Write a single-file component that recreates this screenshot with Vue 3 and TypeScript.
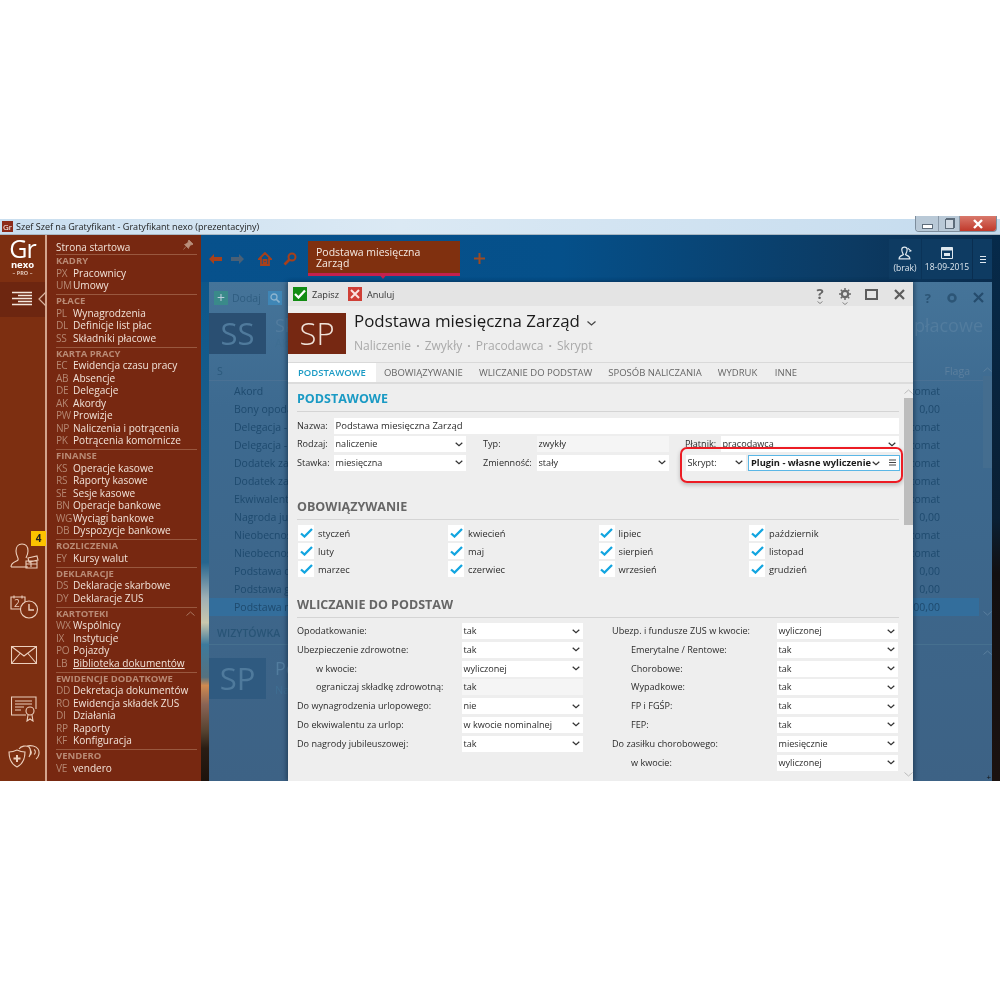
<script setup lang="ts">
interface Item { code: string; label: string; link?: boolean }
interface Section { title: string; items: Item[]; collapse?: boolean }

const sections: Section[] = [
  { title: 'KADRY', items: [{ code: 'PX', label: 'Pracownicy' }, { code: 'UM', label: 'Umowy' }] },
  { title: 'PŁACE', items: [{ code: 'PL', label: 'Wynagrodzenia' }, { code: 'DL', label: 'Definicje list płac' }, { code: 'SS', label: 'Składniki płacowe' }] },
  { title: 'KARTA PRACY', items: [{ code: 'EC', label: 'Ewidencja czasu pracy' }, { code: 'AB', label: 'Absencje' }, { code: 'DE', label: 'Delegacje' }, { code: 'AK', label: 'Akordy' }, { code: 'PW', label: 'Prowizje' }, { code: 'NP', label: 'Naliczenia i potrącenia' }, { code: 'PK', label: 'Potrącenia komornicze' }] },
  { title: 'FINANSE', items: [{ code: 'KS', label: 'Operacje kasowe' }, { code: 'RS', label: 'Raporty kasowe' }, { code: 'SE', label: 'Sesje kasowe' }, { code: 'BN', label: 'Operacje bankowe' }, { code: 'WG', label: 'Wyciągi bankowe' }, { code: 'DB', label: 'Dyspozycje bankowe' }] },
  { title: 'ROZLICZENIA', items: [{ code: 'EY', label: 'Kursy walut' }] },
  { title: 'DEKLARACJE', items: [{ code: 'DS', label: 'Deklaracje skarbowe' }, { code: 'DY', label: 'Deklaracje ZUS' }] },
  { title: 'KARTOTEKI', collapse: true, items: [{ code: 'WX', label: 'Wspólnicy' }, { code: 'IX', label: 'Instytucje' }, { code: 'PO', label: 'Pojazdy' }, { code: 'LB', label: 'Biblioteka dokumentów', link: true }] },
  { title: 'EWIDENCJE DODATKOWE', items: [{ code: 'DD', label: 'Dekretacja dokumentów' }, { code: 'RO', label: 'Ewidencja składek ZUS' }, { code: 'DI', label: 'Działania' }, { code: 'RP', label: 'Raporty' }, { code: 'KF', label: 'Konfiguracja' }] },
  { title: 'VENDERO', items: [{ code: 'VE', label: 'vendero' }] },
]

const bgRows: [string, string, boolean?][] = [
  ['Akord', 'Automat'], ['Bony opodatkowane', '0,00'], ['Delegacja - nocleg', 'Automat'], ['Delegacja - posiłki', 'Automat'],
  ['Dodatek za godziny', 'Automat'], ['Dodatek za godziny', 'Automat'], ['Ekwiwalent za urlop', 'Automat'], ['Nagroda jubileuszowa', '0,00'],
  ['Nieobecność', 'Automat'], ['Nieobecność', 'Automat'], ['Podstawa dzienna', '0,00'], ['Podstawa godzinowa', '0,00'], ['Podstawa miesięczna', '1000,00', true],
]

const tabs = ['PODSTAWOWE', 'OBOWIĄZYWANIE', 'WLICZANIE DO PODSTAW', 'SPOSÓB NALICZANIA', 'WYDRUK', 'INNE']
const months = ['styczeń', 'luty', 'marzec', 'kwiecień', 'maj', 'czerwiec', 'lipiec', 'sierpień', 'wrzesień', 'październik', 'listopad', 'grudzień']

interface Row { label: string; value: string; indent?: boolean; plain?: boolean }
const leftRows: Row[] = [
  { label: 'Opodatkowanie:', value: 'tak' },
  { label: 'Ubezpieczenie zdrowotne:', value: 'tak' },
  { label: 'w kwocie:', value: 'wyliczonej', indent: true },
  { label: 'ograniczaj składkę zdrowotną:', value: 'tak', indent: true, plain: true },
  { label: 'Do wynagrodzenia urlopowego:', value: 'nie' },
  { label: 'Do ekwiwalentu za urlop:', value: 'w kwocie nominalnej' },
  { label: 'Do nagrody jubileuszowej:', value: 'tak' },
]
const rightRows: Row[] = [
  { label: 'Ubezp. i fundusze ZUS w kwocie:', value: 'wyliczonej' },
  { label: 'Emerytalne / Rentowe:', value: 'tak', indent: true },
  { label: 'Chorobowe:', value: 'tak', indent: true },
  { label: 'Wypadkowe:', value: 'tak', indent: true },
  { label: 'FP i FGŚP:', value: 'tak', indent: true },
  { label: 'FEP:', value: 'tak', indent: true },
  { label: 'Do zasiłku chorobowego:', value: 'miesięcznie' },
  { label: 'w kwocie:', value: 'wyliczonej', indent: true },
]
const columns = [leftRows, rightRows]
</script>

<template>
  <div class="page">
    <div class="window">
      <div class="titlebar">
        <span class="app-icon">Gr</span>
        <span class="title-text">Szef Szef na Gratyfikant - Gratyfikant nexo (prezentacyjny)</span>
        <div class="win-btns">
          <span class="wb wb-min"><i class="min-glyph"></i></span>
          <span class="wb wb-res"><i class="res-glyph"></i></span>
          <span class="wb wb-close">
            <svg width="14" height="10" viewBox="0 0 14 10"><path d="M3 1l8 8M11 1l-8 8" stroke="#fff" stroke-width="2.4" fill="none" /></svg>
          </span>
        </div>
      </div>

      <div class="app">
        <aside class="rail">
          <div class="logo">
            <span class="logo-gr">Gr</span>
            <span class="logo-nexo">nexo</span>
            <span class="logo-pro">– PRO –</span>
          </div>
          <div class="rail-active">
            <svg width="24" height="17" viewBox="0 0 24 17">
              <path d="M2 1.500h20M8 4.500h14M2 7.500h20M8 10.500h14M2 13.500h20" stroke="#f3e6dc" stroke-width="1.300" fill="none" />
            </svg>
            <svg class="rail-notch" width="9" height="16" viewBox="0 0 9 16"><path d="M8 1L1 8l7 7" stroke="#d9b4a0" stroke-width="1.200" fill="none" /></svg>
          </div>
          <div class="rail-icons">
            <div class="rail-icon ri-people">
              <span class="badge">4</span>
              <svg width="30" height="26" viewBox="0 0 30 26" fill="none" stroke="#eccfbd" stroke-width="1.100">
                <path d="M1 24c0-5 5-5 7-7 1-2-2-4-2-9 0-4 2-7 6-7s6 3 6 7c0 3-1 5-2 7" />
                <path d="M1 24h17" />
                <path d="M18 15l9-2 1 4-9 2zM16 18h11v7H16zM16 21h11M21 19v5" />
              </svg>
            </div>
            <div class="rail-icon ri-cal">
              <svg width="29" height="24" viewBox="0 0 29 24" fill="none" stroke="#eccfbd" stroke-width="1.100">
                <path d="M11 14H1V2h14v5M4 .5v3M12 .5v3" />
                <text x="4" y="12" font-size="10" fill="#eccfbd" stroke="none" font-family="Open Sans, sans-serif">2</text>
                <circle cx="19" cy="14.500" r="8.500" />
                <path d="M19 9v6h5" stroke-width="1.400" />
              </svg>
            </div>
            <div class="rail-icon ri-mail">
              <svg width="26" height="18" viewBox="0 0 26 18" fill="none" stroke="#eccfbd" stroke-width="1.100">
                <path d="M.5.500h25v17H.5zM.5.500L13 10 25.500.500M.5 17.500L9 7.500M25.500 17.500L17 7.500" />
              </svg>
            </div>
            <div class="rail-icon ri-cert">
              <svg width="26" height="26" viewBox="0 0 26 26" fill="none" stroke="#eccfbd" stroke-width="1.100">
                <path d="M15 19H.5V1h24.500v12" />
                <path d="M4 5h17M4 8h17M4 11h9M4 14h6" stroke-width="1" />
                <circle cx="19" cy="15" r="4" />
                <path d="M17 19l-1 6 3-2 3 2-1-6" />
              </svg>
            </div>
            <div class="rail-icon ri-shield">
              <svg width="32" height="23" viewBox="0 0 32 23" fill="none" stroke="#eccfbd" stroke-width="1.100">
                <path d="M1 7c4 0 6-1 8-2 2 1 4 2 8 2 0 7-2 12-8 15C3 19 1 14 1 7z" />
                <path d="M9 10v7M5.500 13.500h7" stroke-width="2" />
                <path d="M11 4c2-3 7-4 10-2 2 2 2 7 0 10M19 1c4-1 9 0 11 3 2 3 1 8-2 10M22 5a3 3 0 0 1 0 5M26 4.500a3 3 0 0 1 0 5" />
              </svg>
            </div>
          </div>
        </aside>

        <nav class="menu">
          <div class="menu-start">
            <span>Strona startowa</span>
            <svg class="pin" width="10" height="10" viewBox="0 0 10 10"><path d="M6 0l4 4-1 1-1-.5L6 7l-.5 1.500L1.500 4.500 3 4l2.500-2L5 1zM3 6.500L.5 9.500" fill="#b98f7b" stroke="#b98f7b" stroke-width=".7" /></svg>
          </div>
          <section v-for="s in sections" :key="s.title" class="menu-sec">
            <div class="menu-head">
              <span>{{ s.title }}</span>
              <svg v-if="s.collapse" width="9" height="5" viewBox="0 0 9 5"><path d="M.5 4.500l4-3.500 4 3.500" stroke="#a87660" fill="none" /></svg>
            </div>
            <div v-for="it in s.items" :key="it.code" class="menu-row">
              <span class="code">{{ it.code }}</span>
              <span class="lab" :class="{ link: it.link }">{{ it.label }}</span>
            </div>
          </section>
        </nav>

        <main class="desk">
          <div class="topbar">
            <div class="nav-icons">
              <svg width="14" height="12" viewBox="0 0 14 12"><path d="M6 1L1 6l5 5V8h8V4H6z" fill="#a8401a" /></svg>
              <svg class="nav-dim" width="14" height="12" viewBox="0 0 14 12"><path d="M8 1l5 5-5 5V8H0V4h8z" fill="#4a6076" /></svg>
              <svg class="nav-home" width="14" height="14" viewBox="0 0 14 14"><path d="M7 1L1 7h2v6h8V7h2zM5.500 8h3v3h-3z" fill="none" stroke="#a8401a" stroke-width="1.800" /></svg>
              <svg class="nav-find" width="14" height="14" viewBox="0 0 14 14"><circle cx="9" cy="5" r="3.500" fill="none" stroke="#a8401a" stroke-width="2" /><path d="M6.500 7.500L1.500 12.500" stroke="#a8401a" stroke-width="2.600" /></svg>
            </div>
            <div class="doc-tab">Podstawa miesięczna<br />Zarząd<i class="doc-arrow"></i></div>
            <svg class="add-tab" width="11" height="11" viewBox="0 0 11 11"><path d="M5.500 0v11M0 5.500h11" stroke="#a04a20" stroke-width="2" /></svg>
            <div class="top-right">
              <div class="tr-btn tr-user">
                <svg width="14" height="14" viewBox="0 0 13 13" fill="none" stroke="#dfe8ef" stroke-width="1.100"><path d="M1 12c0-3 3-3 4-4C4 6 3.500 5 3.500 3.500 3.500 2 4.500 1 6 1s2.500 1 2.500 2.500C8.500 5 8 6 7 8c1 1 4 1 4 4z" /><path d="M9 2l3 2.500-1.500.5" /></svg>
                <span>(brak)</span>
              </div>
              <div class="tr-btn tr-date">
                <svg width="12" height="12" viewBox="0 0 12 12"><path d="M.5.500h11v11H.5z" fill="none" stroke="#dfe8ef" /><path d="M.5.500h11v3H.5z" fill="#dfe8ef" /><path d="M3 6h6v3H3z" fill="#dfe8ef" /></svg>
                <span>18-09-2015</span>
              </div>
              <div class="tr-btn tr-menu"><i></i><i></i><i></i></div>
            </div>
          </div>

          <div class="bg-win">
            <div class="bg-tools">
              <span class="bg-add">+</span><span>Dodaj</span>
              <span class="bg-find"><svg width="10" height="10" viewBox="0 0 10 10"><circle cx="4" cy="4" r="3" fill="none" stroke="#8db4cf" stroke-width="1.300" /><path d="M6.200 6.200L9.500 9.500" stroke="#8db4cf" stroke-width="1.600" /></svg></span>
              <div class="bg-tools-right">
                <span>?</span>
                <svg width="12" height="12" viewBox="0 0 12 12"><circle cx="6" cy="6" r="3.500" fill="none" stroke="#2c5576" stroke-width="2.500" /></svg>
                <svg width="11" height="11" viewBox="0 0 11 11"><path d="M1 1l9 9M10 1l-9 9" stroke="#254c6d" stroke-width="2.200" /></svg>
              </div>
            </div>
            <div class="bg-head">
              <div class="bg-tile">SS</div>
              <div class="bg-head-text">
                <div class="bg-h1"><span>Składniki</span><span>płacowe</span></div>
                <div class="bg-h2">Aktywne</div>
              </div>
            </div>
            <div class="bg-thead"><span>S</span><span class="bg-flag">Flaga</span></div>
            <div class="bg-rows">
              <div v-for="(r, i) in bgRows" :key="i" class="bg-row" :class="{ sel: r[2] }">
                <span>{{ r[0] }}</span><span>{{ r[1] }}</span>
              </div>
            </div>
            <div class="bg-wiz">WIZYTÓWKA</div>
            <div class="bg-head bg-head2">
              <div class="bg-tile">SP</div>
              <div class="bg-head-text">
                <div class="bg-h1"><span>Podstawa</span></div>
                <div class="bg-h2">Naliczenie</div>
              </div>
            </div>
            <i class="bg-thumb"></i>
            <svg class="bg-ch bg-ch1" width="9" height="5" viewBox="0 0 9 5"><path d="M.5 4.500l4-3.500 4 3.500" stroke="#5b7f9e" fill="none" /></svg>
            <svg class="bg-ch bg-ch2" width="9" height="5" viewBox="0 0 9 5"><path d="M.5.500l4 3.500 4-3.500" stroke="#5b7f9e" fill="none" /></svg>
            <svg class="bg-ch bg-ch3" width="9" height="5" viewBox="0 0 9 5"><path d="M.5 4.500l4-3.500 4 3.500" stroke="#5b7f9e" fill="none" /></svg>
            <span class="bg-grip">+</span>
          </div>

          <div class="modal">
            <div class="m-tools">
              <span class="tb tb-ok"><svg width="12" height="10" viewBox="0 0 12 10"><path d="M1 5l3.500 3.500L11 1.500" stroke="#fff" stroke-width="2.300" fill="none" /></svg></span>
              <span class="tb-label">Zapisz</span>
              <span class="tb tb-no"><svg width="10" height="10" viewBox="0 0 10 10"><path d="M1 1l8 8M9 1l-8 8" stroke="#fbe3df" stroke-width="2" fill="none" /></svg></span>
              <span class="tb-label">Anuluj</span>
              <div class="m-tools-right">
                <span class="mt-q">?<svg width="6" height="3" viewBox="0 0 6 3"><path d="M.5.500L3 2.500 5.500.500" stroke="#888" fill="none" /></svg></span>
                <span class="mt-g">
                  <svg width="12" height="12" viewBox="0 0 12 12"><circle cx="6" cy="6" r="3.200" fill="none" stroke="#6a6a6a" stroke-width="2.200" /><path d="M6 0v2.500M6 9.500V12M0 6h2.500M9.500 6H12M1.800 1.800l1.700 1.700M8.500 8.500l1.700 1.700M10.200 1.800L8.500 3.500M3.500 8.500l-1.700 1.700" stroke="#6a6a6a" stroke-width="1.500" /></svg>
                  <svg width="6" height="3" viewBox="0 0 6 3"><path d="M.5.500L3 2.500 5.500.500" stroke="#888" fill="none" /></svg>
                </span>
                <svg class="mt-max" width="13" height="11" viewBox="0 0 13 11"><path d="M1 1h11v9H1z" fill="none" stroke="#5c5c5c" stroke-width="2" /></svg>
                <svg class="mt-x" width="11" height="11" viewBox="0 0 11 11"><path d="M1 1l9 9M10 1l-9 9" stroke="#5c5c5c" stroke-width="2.200" /></svg>
              </div>
            </div>

            <div class="m-head">
              <div class="m-tile">SP</div>
              <div class="m-head-text">
                <div class="m-title">Podstawa miesięczna Zarząd
                  <svg width="9" height="5" viewBox="0 0 9 5"><path d="M.5.500l4 3.500 4-3.500" stroke="#444" stroke-width="1.200" fill="none" /></svg>
                </div>
                <div class="m-sub">Naliczenie <b>·</b> Zwykły <b>·</b> Pracodawca <b>·</b> Skrypt</div>
              </div>
            </div>

            <div class="m-tabs">
              <span v-for="(t, i) in tabs" :key="t" class="m-tab" :class="{ on: i === 0 }">{{ t }}</span>
            </div>

            <div class="m-body">
              <h2 class="sec">PODSTAWOWE</h2>
              <div class="basic">
                <div class="b-row">
                  <label class="b-lab">Nazwa:</label>
                  <div class="field grow nazwa">Podstawa miesięczna Zarząd</div>
                </div>
                <div class="b-row">
                  <label class="b-lab">Rodzaj:</label>
                  <div class="field sel-w">naliczenie<svg class="chev" width="8" height="5" viewBox="0 0 8 5"><path d="M.7.700L4 3.800 7.300.700" stroke="#333" stroke-width="1.200" fill="none" /></svg></div>
                  <label class="b-lab2">Typ:</label>
                  <div class="field sel-w plain">zwykły</div>
                  <label class="b-lab3">Płatnik:</label>
                  <div class="field grow">pracodawca<svg class="chev" width="8" height="5" viewBox="0 0 8 5"><path d="M.7.700L4 3.800 7.300.700" stroke="#333" stroke-width="1.200" fill="none" /></svg></div>
                </div>
                <div class="b-row">
                  <label class="b-lab">Stawka:</label>
                  <div class="field sel-w">miesięczna<svg class="chev" width="8" height="5" viewBox="0 0 8 5"><path d="M.7.700L4 3.800 7.300.700" stroke="#333" stroke-width="1.200" fill="none" /></svg></div>
                  <label class="b-lab2">Zmienność:</label>
                  <div class="field sel-w">stały<svg class="chev" width="8" height="5" viewBox="0 0 8 5"><path d="M.7.700L4 3.800 7.300.700" stroke="#333" stroke-width="1.200" fill="none" /></svg></div>
                  <div class="field skrypt-lab">Skrypt:<svg class="chev" width="8" height="5" viewBox="0 0 8 5"><path d="M.7.700L4 3.800 7.300.700" stroke="#333" stroke-width="1.200" fill="none" /></svg></div>
                  <div class="field skrypt">
                    <b>Plugin - własne wyliczenie</b>
                    <svg class="chev2" width="8" height="5" viewBox="0 0 8 5"><path d="M.7.700L4 3.800 7.300.700" stroke="#333" stroke-width="1.200" fill="none" /></svg>
                    <svg class="ham" width="7" height="7" viewBox="0 0 7 7"><path d="M0 1h7M0 3.500h7M0 6h7" stroke="#444" /></svg>
                  </div>
                </div>
              </div>
              <div class="red-box"></div>

              <h2 class="sec sec-grey sec-2">OBOWIĄZYWANIE</h2>
              <div class="months">
                <div v-for="m in months" :key="m" class="month">
                  <span class="box"><svg width="13" height="10" viewBox="0 0 13 10"><path d="M1 5.500l3.500 3L12 1" stroke="#12a5e0" stroke-width="2.300" fill="none" /></svg></span>
                  <span>{{ m }}</span>
                </div>
              </div>

              <h2 class="sec sec-grey sec-3">WLICZANIE DO PODSTAW</h2>
              <div class="wl">
                <div v-for="(col, ci) in columns" :key="ci" class="wl-col">
                  <div v-for="r in col" :key="r.label + r.value" class="wl-row">
                    <label class="wl-lab" :class="{ ind: r.indent }">{{ r.label }}</label>
                    <div class="field wl-sel" :class="{ plain: r.plain }">{{ r.value }}
                      <svg v-if="!r.plain" class="chev" width="8" height="5" viewBox="0 0 8 5"><path d="M.7.700L4 3.800 7.300.700" stroke="#333" stroke-width="1.200" fill="none" /></svg>
                    </div>
                  </div>
                </div>
              </div>

              <div class="m-scroll">
                <svg width="9" height="5" viewBox="0 0 9 5"><path d="M.5 4.500l4-3.500 4 3.500" stroke="#bbb" fill="none" /></svg>
                <i class="m-thumb"></i>
                <svg class="m-scroll-down" width="9" height="5" viewBox="0 0 9 5"><path d="M.5.500l4 3.500 4-3.500" stroke="#bbb" fill="none" /></svg>
              </div>
            </div>
          </div>
        </main>
      </div>
    </div>
  </div>
</template>

<style>
html, body { margin: 0; background: #fff; }
</style>

<style scoped>
.page {
  width: 1000px;
  height: 1000px;
  padding-top: 219px;
  box-sizing: border-box;
  background: #fff;
  font-family: "Open Sans", "Noto Sans", sans-serif;
  overflow: hidden;
  filter: blur(0.35px);
}
.window { height: 562px; display: flex; flex-direction: column; }
.titlebar {
  height: 16px;
  display: flex;
  align-items: center;
  position: relative;
  background: linear-gradient(to right, #c9deef, #dbe9f4 40%, #c4dbee);
  border-bottom: 1px solid #a9b8c4;
  box-sizing: border-box;
}
.app-icon {
  width: 11px; height: 11px; margin-left: 2px; background: #8c2a18; color: #fff;
  font-size: 8px; line-height: 11px; text-align: center;
}
.title-text { margin-left: 3px; font-size: 9.050px; color: #1c1c1c; white-space: nowrap; }
.win-btns {
  position: absolute; right: 3px; top: -3px; display: flex; height: 15px;
  border: 1px solid #7d8d9c; border-top: 0; border-radius: 0 0 4px 4px; overflow: hidden;
}
.wb { display: flex; align-items: center; justify-content: center; }
.wb-min { width: 22px; background: #b9c9d7; border-right: 1px solid #8a99a8; }
.wb-res { width: 20px; background: #b9c9d7; border-right: 1px solid #8a99a8; }
.wb-close { width: 36px; background: linear-gradient(#d9796c, #c0392b); }
.min-glyph { width: 9px; height: 3px; background: #fff; border: 1px solid #5d6c7a; margin-top: 5px; }
.res-glyph { width: 7px; height: 8px; border: 1px solid #5d6c7a; background: #cfd9e3; box-shadow: 1px -1px 0 #5d6c7a; }

.app { flex: 1; display: flex; min-height: 0; }

.rail {
  width: 45px; flex: none; background: #7d2f11; border-right: 2px solid #d3a48d;
  display: flex; flex-direction: column; position: relative;
}
.logo { height: 47px; display: flex; flex-direction: column; align-items: center; color: #fff; padding-top: 1px; box-sizing: border-box; }
.logo-gr { font-size: 25px; line-height: 25px; letter-spacing: -1px; font-weight: 400; }
.logo-nexo { font-size: 9.500px; line-height: 8px; font-weight: 700; }
.logo-pro { font-size: 5.500px; line-height: 9px; font-weight: 700; color: #e2c8ba; }
.rail-active {
  height: 35px; background: #6d2610; display: flex; align-items: center; justify-content: flex-end;
  padding-right: 11px; position: relative;
}
.rail-notch { position: absolute; right: -2px; top: 9px; }
.rail-icons { position: relative; flex: 1; }
.rail-icon { position: absolute; line-height: 0; }
.ri-people { left: 10px; top: 226px; }
.ri-cal { left: 9.500px; top: 278px; }
.ri-mail { left: 11px; top: 329px; }
.ri-cert { left: 11px; top: 379px; }
.ri-shield { left: 8px; top: 428px; }
.badge {
  position: absolute; left: 21px; top: -12px; width: 15px; height: 15px; background: #fdc300;
  color: #222; font-size: 10px; font-weight: 700; line-height: 15px; text-align: center;
}

.menu {
  width: 154px; flex: none; background: #772811; padding: 5.500px 4px 0 9px; box-sizing: border-box;
  color: #f1e2d8; font-size: 10.100px; line-height: 10.500px; overflow: hidden;
}
.menu-start { display: flex; justify-content: space-between; align-items: flex-start; border-bottom: 1px solid #99583f; padding-bottom: .5px; height: 13px; box-sizing: content-box; font-size: 10px; line-height: 12px; }
.pin { margin: -1px 4px 0 0; }
.menu-sec { border-bottom: 1px solid #99583f; padding-bottom: 1.500px; }
.menu-sec:last-child { border-bottom: 0; }
.menu-head { height: 12.500px; display: flex; justify-content: space-between; align-items: center; font-weight: 700; font-size: 9.500px; color: #b98a75; white-space: nowrap; padding-right: 2px; }
.menu-row { height: 12.500px; display: flex; white-space: nowrap; }
.code { width: 17px; flex: none; color: #b58772; letter-spacing: -.3px; }
.lab.link { text-decoration: underline; }

.desk {
  flex: 1; position: relative; min-width: 0; overflow: hidden;
  background-color: #0b4a7c;
  background-image:
    linear-gradient(to bottom, #062a4a 0, #0a1f33 52%, #120f10 62%, #1b1210 100%),
    linear-gradient(to right, #07518c 0, #05508a 45%, #0c3a62 82%, #092b4c 100%),
    linear-gradient(to bottom, #095489 0, #27668f 60%, #9fb0b5 66.500%, #c9c7ae 71%, #3d7a9c 75%, #55717f 81%, #d08a50 82.500%, #8a6455 86%, #54412f 91%, #2a1d14 94%, #1c120c 100%);
  background-size: 8px 100%, 100% 47px, 100% 100%;
  background-position: right top, left top, left top;
  background-repeat: no-repeat;
}

.topbar { height: 47px; position: relative; }
.nav-icons { position: absolute; left: 7px; top: 17px; display: flex; align-items: center; line-height: 0; }
.nav-dim { margin-left: 9px; }
.nav-home { margin-left: 13px; }
.nav-find { margin-left: 11px; }
.doc-tab {
  position: absolute; left: 107px; top: 6px; width: 152px; height: 35px; background: #80300f;
  border-bottom: 3px solid #c4214e; box-sizing: border-box; color: #f5ebe4;
  font-size: 10.500px; line-height: 11px; padding: 5.500px 8px 0; font-weight: 500;
}
.doc-arrow {
  position: absolute; left: 70px; top: 32px; border-left: 5px solid transparent; border-right: 5px solid transparent;
  border-top: 6px solid #c4214e;
}
.add-tab { position: absolute; left: 273px; top: 18px; }
.top-right { position: absolute; right: 8px; top: 4px; height: 40px; display: flex; gap: 1px; color: #dfe8ef; font-size: 8.500px; }
.tr-btn { background: #0e3b62; display: flex; flex-direction: column; align-items: center; justify-content: center; gap: 2px; }
.tr-user { width: 32px; }
.tr-date { width: 50px; }
.tr-menu { width: 19px; gap: 2px; }
.tr-menu i { width: 6px; height: 1px; background: #dfe8ef; }

.bg-win {
  position: absolute; left: 8px; top: 47px; width: 783px; bottom: 0;
  background: linear-gradient(#457499 0, #3d6a90 25%, #3d6285 100%);
  color: #1e4a6e; font-size: 10.500px;
}
.bg-tools { height: 31px; display: flex; align-items: center; padding: 0 0 0 5px; gap: 4px; font-size: 10.500px; color: #2f5d80; }
.bg-add { width: 14px; height: 14px; background: #3a8a8a; color: #bcd; text-align: center; line-height: 13px; font-size: 14px; }
.bg-find { width: 14px; height: 14px; background: #3f86b6; margin-left: 3px; display: flex; align-items: center; justify-content: center; }
.bg-tools-right { margin-left: auto; display: flex; align-items: center; gap: 15px; padding-right: 8px; font-size: 13px; font-weight: 700; color: #2c5576; }
.bg-head { display: flex; height: 49px; gap: 9px; }
.bg-tile { width: 57px; height: 41px; background: #2a4f72; color: #4f7a9c; font-size: 31px; line-height: 40px; text-align: center; flex: none; }
.bg-head-text { flex: 1; padding-right: 9px; }
.bg-h1 { display: flex; justify-content: space-between; font-size: 18px; line-height: 24px; color: #527c9e; }
.bg-h2 { font-size: 11px; line-height: 16px; color: #3f6e92; margin-top: -2px; }
.bg-thead { height: 18px; display: flex; justify-content: space-between; padding: 0 22px 0 8px; align-items: center; border-bottom: 1px solid #4a7194; color: #2b597c; }
.bg-flag { color: #5b7f9e; }
.bg-rows { margin-top: 1px; width: 770px; }
.bg-row { height: 18px; line-height: 18px; display: flex; justify-content: space-between; padding: 0 39px 0 25px; box-sizing: border-box; }
.bg-row.sel { background: #336e9c; }
.bg-wiz { height: 25px; line-height: 26px; padding-left: 8px; font-weight: 600; color: #285476; font-size: 10.500px; border-bottom: 1px solid #46708f; box-sizing: border-box; margin-top: 4px; }
.bg-head2 { margin-top: 13px; height: 41px; }
.bg-head2 .bg-tile { background: #2f5a80; }
.bg-head2 .bg-h1 { margin-top: -2px; }
.bg-head2 .bg-h2 { margin-top: 2px; }
.bg-thumb { position: absolute; right: 0; top: 94px; width: 9px; height: 92px; background: #446d8f; }
.bg-ch { position: absolute; right: 0; }
.bg-ch1 { top: 85px; }
.bg-ch2 { top: 329px; }
.bg-ch3 { top: 368px; }
.bg-grip { position: absolute; right: 1px; bottom: 0; font-size: 8px; line-height: 8px; color: #111; }

.modal {
  position: absolute; left: 87px; top: 47px; width: 625px; bottom: 0; background: #eeeeee;
  display: flex; flex-direction: column; box-shadow: -2px 0 4px rgba(10, 30, 50, .4), 2px 0 4px rgba(10, 30, 50, .4);
  color: #2b2b2b;
}
.m-tools { height: 24px; background: #e4e4e4; display: flex; align-items: center; padding-left: 5px; font-size: 9.200px; }
.tb { width: 14px; height: 14px; display: flex; align-items: center; justify-content: center; }
.tb-ok { background: #128c13; }
.tb-no { background: #cf3f36; margin-left: 9px; }
.tb-label { margin-left: 5px; color: #333; }
.m-tools-right { margin-left: auto; display: flex; align-items: center; height: 100%; padding-right: 8px; }
.mt-q { display: flex; flex-direction: column; align-items: center; font-size: 15px; font-weight: 700; line-height: 15px; color: #666; width: 10px; margin-top: 1px; }
.mt-g { display: flex; flex-direction: column; align-items: center; gap: 2px; margin-left: 14px; margin-top: 5px; }
.mt-max { margin-left: 14px; }
.mt-x { margin-left: 16px; }
.m-head { height: 56px; display: flex; padding-top: 7px; box-sizing: border-box; }
.m-tile { width: 58px; height: 41px; background: #762812; color: #f0e3da; font-size: 31px; line-height: 40px; text-align: center; font-weight: 300; flex: none; }
.m-head-text { margin-left: 8px; }
.m-title { font-size: 16.900px; line-height: 20px; color: #1a1a1a; white-space: nowrap; margin-top: -2px; }
.m-title svg { margin: 0 0 1px 3px; }
.m-sub { font-size: 12px; line-height: 16px; color: #a9a9a9; margin-top: 7px; white-space: nowrap; }
.m-sub b { font-weight: 700; margin: 0 2px; }
.m-tabs { display: flex; border-top: 1px solid #d9d9d9; border-bottom: 2px solid #dcdcdc; height: 19px; }
.m-tab { padding: 0 8px; font-size: 9.500px; line-height: 20px; color: #666; white-space: nowrap; font-weight: 500; }
.m-tab.on { background: #fff; color: #1a9ac4; font-weight: 600; padding: 0 10px; }
.m-tab:last-child { margin-left: 1.500px; }

.m-body { flex: 1; position: relative; padding: 6px 14px 0 9px; min-height: 0; }
.sec {
  margin: 0; font-size: 12.500px; line-height: 17px; height: 17px; padding-bottom: 4px; font-weight: 700;
  border-bottom: 1px solid #d4d4d4; color: #1a9ac4;
}
.sec-grey { color: #666; }
.sec-2 { margin-top: 27px; }
.sec-3 { margin-top: 16.500px; }
.basic { margin-top: 5.500px; display: flex; flex-direction: column; gap: 2.500px; }
.b-row { display: flex; height: 16px; font-size: 9.100px; line-height: 15px; }
.b-lab { width: 37px; flex: none; }
.b-lab2 { width: 54px; flex: none; margin-left: 17px; }
.b-lab3 { width: 36px; flex: none; margin-left: 16px; }
.field { background: #fff; position: relative; box-sizing: border-box; padding-left: 1.500px; height: 16px; font-size: 9.100px; line-height: 15px; white-space: nowrap; }
.field.nazwa { font-size: 9.500px; }
.field.plain { background: #f5f5f5; }
.grow { flex: 1; }
.sel-w { width: 132px; flex: none; }
.chev { position: absolute; right: 3.500px; top: 5.500px; }
.skrypt-lab { width: 60px; flex: none; margin-left: 17px; }
.skrypt { width: 152px; flex: none; margin-left: 2px; border: 1px solid #5bb7e6; line-height: 14px; font-size: 9.300px; padding-left: 2px; color: #1a1a1a; }
.chev2 { position: absolute; left: 123px; top: 5px; }
.ham { position: absolute; right: 3px; top: 3px; }
.red-box {
  position: absolute; left: 392px; top: 63px; width: 223px; height: 36px; box-sizing: border-box;
  border: 2px solid #ec1c24; border-radius: 7px; box-shadow: 0 2px 4px rgba(0, 0, 0, .22);
}
.months {
  margin-top: 5.500px; display: grid; grid-template-rows: repeat(3, 18px); grid-auto-flow: column;
  grid-template-columns: 150px 150.500px 150.500px 1fr; padding-left: 1px; font-size: 9.300px;
}
.month { display: flex; align-items: center; gap: 4px; height: 16px; line-height: 15px; }
.box { width: 16px; height: 16px; background: #fff; display: flex; align-items: center; justify-content: center; flex: none; }
.wl { margin-top: 5.500px; display: flex; }
.wl-col { width: 315px; flex: none; display: flex; flex-direction: column; gap: 2.800px; }
.wl-row { display: flex; height: 16px; font-size: 9.100px; line-height: 15px; }
.wl-lab { width: 165px; flex: none; white-space: nowrap; }
.wl-lab.ind { padding-left: 19px; box-sizing: border-box; }
.wl-sel { width: 121px; flex: none; }
.m-scroll {
  position: absolute; right: 0; top: 0; bottom: 0; width: 9px; display: flex; flex-direction: column; align-items: center;
  padding-top: 5px; box-sizing: border-box;
}
.m-thumb { position: absolute; top: 14px; left: 0; width: 9px; height: 127px; background: #bdbdbd; }
.m-scroll-down { position: absolute; bottom: 4px; }
</style>
